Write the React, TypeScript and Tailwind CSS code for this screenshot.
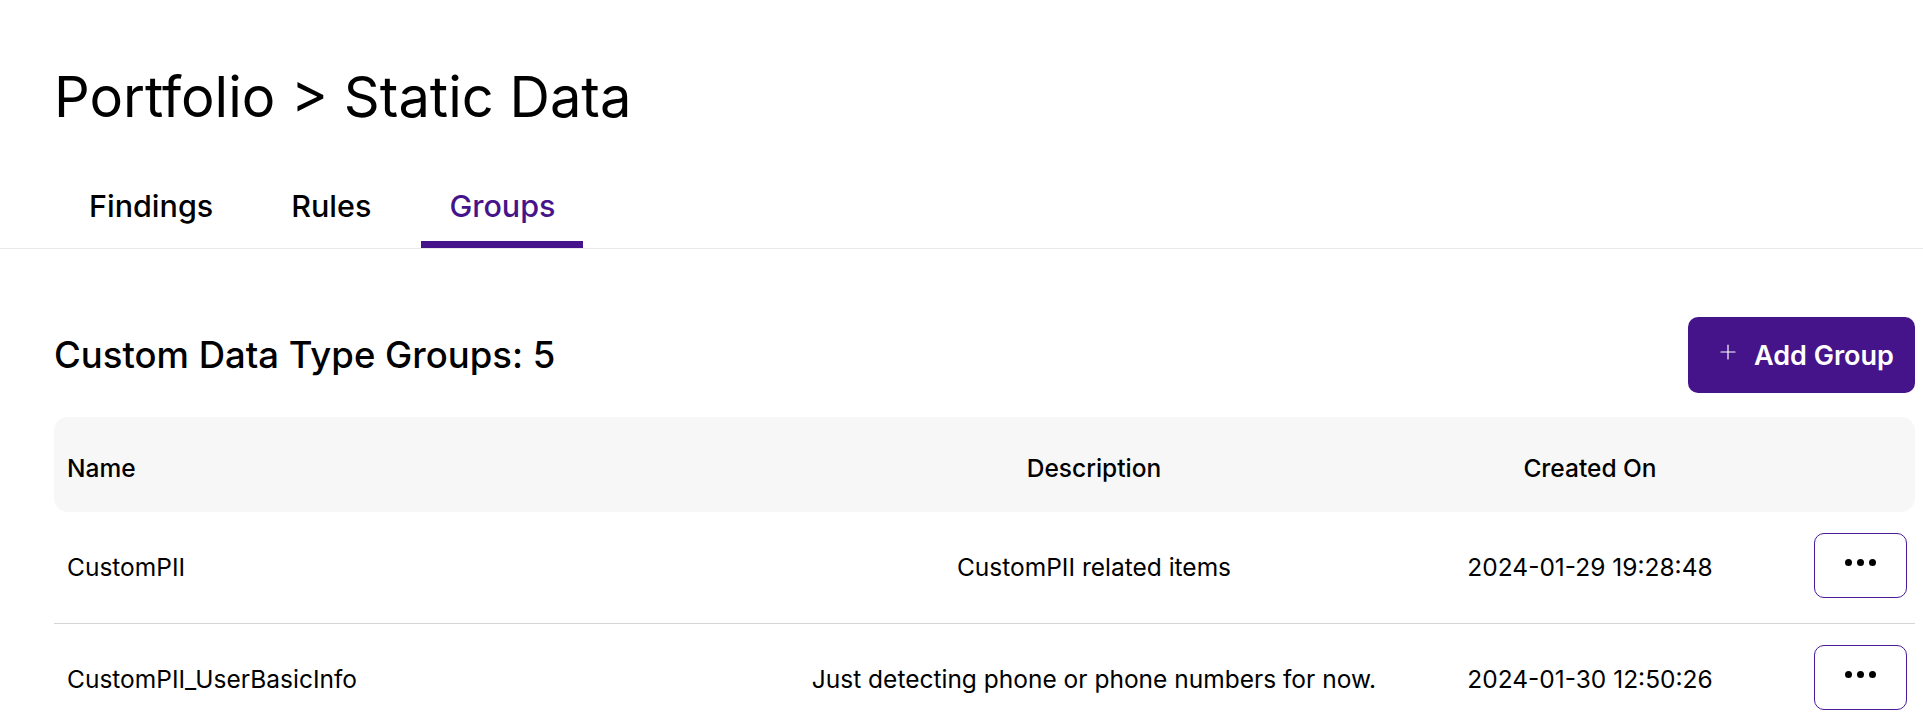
import { Plus } from "lucide-react";

type Group = {
  name: string;
  description: string;
  createdOn: string;
};

const groups: Group[] = [
  { name: "CustomPII", description: "CustomPII related items", createdOn: "2024-01-29 19:28:48" },
  { name: "CustomPII_UserBasicInfo", description: "Just detecting phone or phone numbers for now.", createdOn: "2024-01-30 12:50:26" },
  { name: "CustomPII_Finance", description: "Bank account and card numbers", createdOn: "2024-02-02 09:14:03" },
  { name: "CustomPII_Health", description: "Medical record identifiers", createdOn: "2024-02-05 16:41:37" },
  { name: "CustomPII_Address", description: "Street and postal addresses", createdOn: "2024-02-11 08:22:59" },
];

const tabs = ["Findings", "Rules", "Groups"];

function MoreButton() {
  return (
    <button className="w-[93px] h-[65px] rounded-[10px] border border-[#4a1a9a] bg-white flex items-center justify-center">
      <span className="flex gap-[5px] -mt-[7px]">
        <span className="w-[7px] h-[7px] rounded-full bg-black" />
        <span className="w-[7px] h-[7px] rounded-full bg-black" />
        <span className="w-[7px] h-[7px] rounded-full bg-black" />
      </span>
    </button>
  );
}

export default function App() {
  const active = "Groups";

  return (
    <div className="min-h-screen bg-white text-black font-['Inter',sans-serif]">
      {/* Page title */}
      <div className="pl-[54px] pt-[69px]">
        <h1 className="text-[56px] leading-none font-normal">Portfolio &gt; Static Data</h1>
      </div>

      {/* Tabs */}
      <div className="mt-[66px] border-b border-[#e8e8e8] pl-[61px] flex gap-[22px]">
        {tabs.map((tab) => (
          <div
            key={tab}
            className={
              tab === active
                ? "px-[28px] pb-[18px] border-b-[7px] border-[#45148a] text-[#45148a]"
                : "px-[28px] pb-[18px] border-b-[7px] border-transparent"
            }
          >
            <span className="text-[30.5px] leading-none font-medium">{tab}</span>
          </div>
        ))}
      </div>

      {/* Groups section */}
      <div className="pl-[54px] pr-[8px]">
        <div className="mt-[68px] flex items-center justify-between">
          <h2 className="text-[36.5px] leading-none font-medium">Custom Data Type Groups: 5</h2>
          <button className="h-[76px] w-[227px] rounded-[10px] bg-[#45148a] text-white flex items-center pl-[28px] gap-[14px]">
            <Plus className="w-[24px] h-[24px] mb-[6px]" strokeWidth={1.2} />
            <span className="text-[27px] leading-none font-semibold">Add Group</span>
          </button>
        </div>

        {/* Table */}
        <div className="mt-[24px]">
          <div className="grid grid-cols-[726px_628px_364px_1fr] h-[95px] items-center bg-[#f7f7f7] rounded-[14px] text-[24.5px] leading-none font-medium pt-[7px]">
            <div className="pl-[13px]">Name</div>
            <div className="text-center">Description</div>
            <div className="text-center">Created On</div>
            <div />
          </div>

          {groups.map((g) => (
            <div
              key={g.name}
              className="grid grid-cols-[726px_628px_364px_1fr] h-[112px] items-center border-b border-[#d6d6d6] text-[24.5px] leading-none"
            >
              <div className="pl-[13px]">{g.name}</div>
              <div className="text-center">{g.description}</div>
              <div className="text-center">{g.createdOn}</div>
              <div className="flex justify-end pr-[8px] -mt-[4px]">
                <MoreButton />
              </div>
            </div>
          ))}
        </div>
      </div>
    </div>
  );
}
